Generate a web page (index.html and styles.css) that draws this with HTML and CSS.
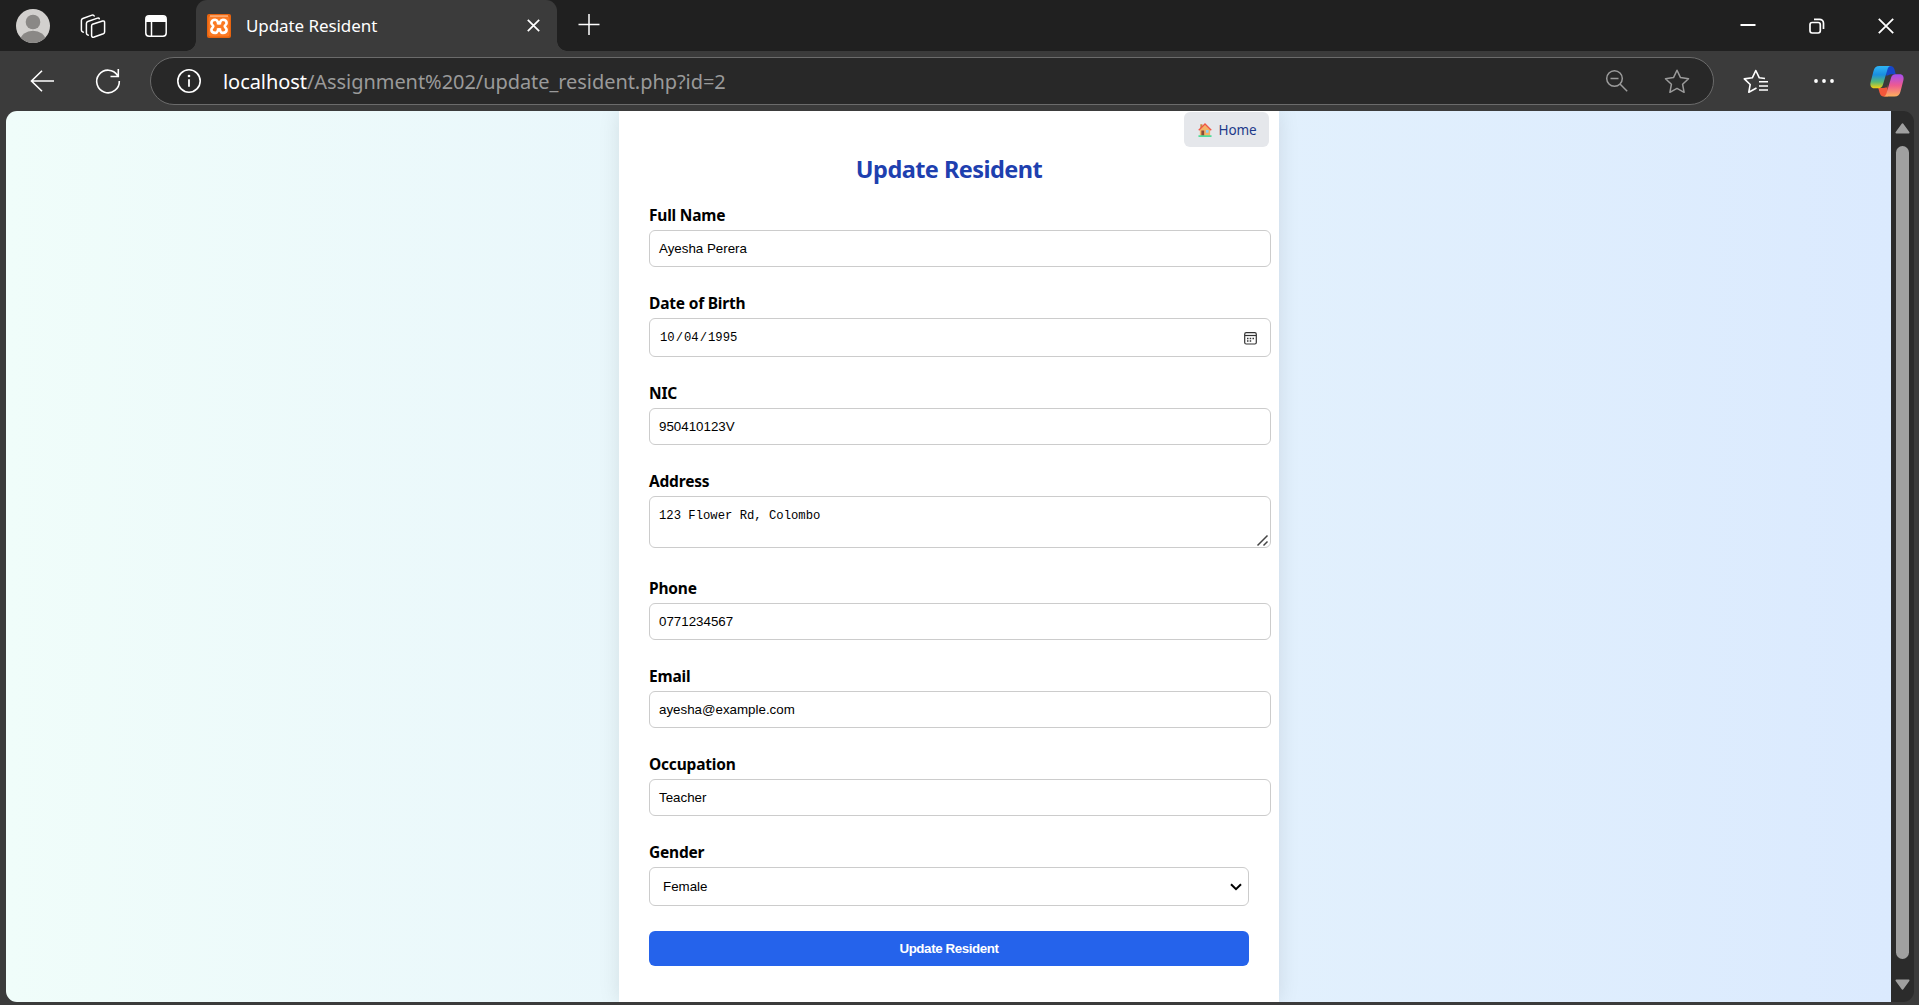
FILE: index.html
```html
<!DOCTYPE html>
<html lang="en">
<head>
<meta charset="utf-8">
<title>Update Resident</title>
<link rel="stylesheet" href="styles.css">
</head>
<body>
<div class="window">
  <header class="tabstrip">
    <svg class="avatar" width="34" height="34" viewBox="0 0 34 34"><defs><clipPath id="av"><circle cx="17" cy="17" r="17"/></clipPath></defs><g clip-path="url(#av)"><rect width="34" height="34" fill="#d2d0ce"/><circle cx="17" cy="13" r="7.3" fill="#8a8886"/><ellipse cx="17" cy="31" rx="12.5" ry="9.3" fill="#8a8886"/></g></svg>
    <svg class="workspaces" width="26" height="26" viewBox="0 0 26 26" fill="none" stroke="#fff" stroke-width="1.5" stroke-linejoin="round" stroke-linecap="round"><path d="M12.5 11.3 22.6 8Q24.6 7.5 24.6 9.5V19Q24.6 20.3 23.3 20.8L14.2 24Q11.6 24.8 11.6 22.4V13Q11.6 11.7 12.5 11.3Z"/><path d="M8.3 22.2 7.5 21.8Q6.4 21.3 6.4 20V10.4Q6.4 9 7.8 8.5L17.5 5.1Q19 4.7 19.3 5.8"/><path d="M3.3 19.2 2.5 18.8Q1.4 18.3 1.4 17V7.4Q1.4 6 2.8 5.5L12 2.1Q13.6 1.6 14.2 3"/></svg>
    <svg class="tabsicon" width="22" height="22" viewBox="0 0 22 22"><rect x=".8" y=".8" width="20.4" height="20.4" rx="3.2" fill="none" stroke="#fff" stroke-width="1.5"/><path d="M1 7V4a3 3 0 0 1 3-3h14a3 3 0 0 1 3 3v3z" fill="#fff"/><path d="M6.5 6v15" stroke="#fff" stroke-width="1.5"/></svg>
    <div class="tab">
      <svg class="favicon" width="24" height="24" viewBox="0 0 24 24"><rect width="24" height="24" rx="2" fill="#e8640f"/><rect x="1.5" y="2" width="21" height="20.5" rx="2" fill="#fb7a24"/><path d="M3 2h18" stroke="#ffc49b" stroke-width="1.2"/><path d="M12 9.300C10.800 9.300 11 5.800 8.200 5.800 5.600 5.800 4.400 7.400 4.400 9c0 1.900 1.900 2.200 1.900 3.300S4.400 13.900 4.400 15.800c0 1.600 1.200 3.100 3.800 3.100 2.800 0 2.600-3.500 3.800-3.500s1 3.500 3.800 3.500c2.600 0 3.800-1.500 3.800-3.100 0-1.900-1.900-2.400-1.900-3.500s1.900-1.400 1.900-3.300c0-1.600-1.200-3.200-3.800-3.200-2.800 0-2.600 3.500-3.800 3.500z" fill="none" stroke="#fff" stroke-width="2.600" stroke-linejoin="round"/><path d="M9.800 9.300h4.400M9.800 15.400h4.400" stroke="#fff" stroke-width="2.200"/></svg>
      <span class="tab-title">Update Resident</span>
      <svg width="13" height="13" viewBox="0 0 13 13"><path d="M.8.8 12.200 12.200M12.200.8.8 12.200" stroke="#fff" stroke-width="1.700"/></svg>
    </div>
    <svg class="plus" width="22" height="22" viewBox="0 0 22 22"><path d="M11 0v21M.5 10.500h21" stroke="#fff" stroke-width="1.500"/></svg>
    <div class="controls">
      <svg width="16" height="16" viewBox="0 0 16 16"><path d="M.5 7h15" stroke="#fff" stroke-width="2"/></svg>
      <svg width="16" height="16" viewBox="0 0 16 16" fill="none" stroke="#fff" stroke-width="1.700"><rect x="1" y="4.500" width="10.300" height="10.500" rx="2.200"/><path d="M5 1.300h5.500a4 4 0 0 1 4 4V11"/></svg>
      <svg width="16" height="16" viewBox="0 0 16 16"><path d="M.8.800 15.200 15.200M15.200.800.8 15.200" stroke="#fff" stroke-width="1.800"/></svg>
    </div>
  </header>
  <div class="toolbar">
    <svg class="back" width="25" height="22" viewBox="0 0 25 22" fill="none" stroke="#fff" stroke-width="1.600"><path d="M24 11H1.500M12 .8 1.500 11 12 21.200"/></svg>
    <svg class="reload" width="26" height="26" viewBox="0 0 26 26" fill="none" stroke="#fff" stroke-width="1.600"><path d="M22.600 7.500A11.300 11.300 0 1 0 24.300 13M23.300 1v7.500H15.500"/></svg>
    <div class="address">
      <svg class="info" width="24" height="24" viewBox="0 0 24 24"><circle cx="12" cy="12" r="11.200" fill="none" stroke="#fff" stroke-width="1.600"/><circle cx="12" cy="7" r="1.300" fill="#fff"/><path d="M12 10.300v7.500" stroke="#fff" stroke-width="1.800"/></svg>
      <div class="url"><span class="host">localhost</span><span class="path">/Assignment%202/update_resident.php?id=2</span></div>
      <svg class="lens" width="22" height="22" viewBox="0 0 22 22" fill="none" stroke="#9b9b9b" stroke-width="1.500"><circle cx="8.500" cy="8.500" r="7.800"/><path d="M14 14l7.200 7.200M4.500 8.500h8"/></svg>
      <svg class="star" width="26" height="25" viewBox="0 0 26 25" fill="none" stroke="#9b9b9b" stroke-width="1.500" stroke-linejoin="round"><path d="m13 1.300 3.500 7.300 8 1.100-5.900 5.600 1.500 8-7.100-3.900-7.100 3.900 1.500-8L1.500 9.700l8-1.100z"/></svg>
    </div>
    <svg class="favs" width="26" height="25" viewBox="0 0 26 25" fill="none" stroke="#fff" stroke-width="1.600" stroke-linejoin="round"><path d="M22 9.500 16.300 8.800 12.800 1.500 9.300 8.800 1.300 9.900 7.200 15.500 5.800 23.200 13.500 19"/><path d="M16 12.700h9M16 17h9M16 21h9"/></svg>
    <svg class="more" width="20" height="4" viewBox="0 0 20 4" fill="#fff"><circle cx="2" cy="2" r="1.900"/><circle cx="10" cy="2" r="1.900"/><circle cx="18" cy="2" r="1.900"/></svg>
    <svg class="copilot" width="34" height="31" viewBox="0 0 34 31"><defs><linearGradient id="c1" x1="0" y1="0" x2="0" y2="1"><stop offset="0" stop-color="#2fb5f5"/><stop offset=".4" stop-color="#1a8ee0"/><stop offset=".72" stop-color="#58b875"/><stop offset="1" stop-color="#f7cf10"/></linearGradient><linearGradient id="c2" x1="0" y1="0" x2="0" y2="1"><stop offset="0" stop-color="#a54df0"/><stop offset=".5" stop-color="#ee5a91"/><stop offset="1" stop-color="#fdb05c"/></linearGradient></defs><path d="M15 0h5.500c2 0 3.500 1.500 4.200 4l1 4.200h-4c-3 0-4 1.500-5 4z" fill="#1747c9"/><path d="M18 30.500h-4.500c-2 0-3.200-1.500-4-4L8.300 22h4c3 0 4-1.500 5-4z" fill="#f4573a"/><path d="M9.500 0H21c-2 0-3 1.500-3.700 4L13 18.500c-.8 2.500-2 3.700-4.500 3.700H4.300C1 22.200-.2 19.500.6 16.200L3.500 5C4.400 1.800 6 0 9.500 0z" fill="url(#c1)"/><path d="M24.500 30.500H13c2 0 3-1.500 3.700-4L21 12c.8-2.500 2-3.700 4.500-3.700h4.200c3.300 0 4.500 2.700 3.700 6l-2.900 11.200c-.9 3.200-2.500 5-6 5z" fill="url(#c2)"/><path d="M16.500 9.500h4.500c-.6.800-.9 1.700-1.200 2.700L17 21.500h-4.200z" fill="#3b3b3b"/></svg>
  </div>
  <div class="viewport">
    <main class="page">
      <section class="card">
        <a class="home"><svg width="14" height="14" viewBox="0 0 15 14" preserveAspectRatio="none"><path d="M2.500 1.200h2.300V5H2.500z" fill="#c9883f"/><path d="M2 6.500 7.500 1.500 13 6.500V13H2z" fill="#f3b467"/><path d="M3.600 7.500h3V13h-3z" fill="#8a4b38"/><path d="M8.500 7h2.800v2.800H8.500z" fill="#8fd0f7"/><path d="M.5 12.200h14V14H.5z" fill="#4fdc9a"/><path d="M.8 7.200 7.500 1l6.700 6.200" fill="none" stroke="#f05545" stroke-width="1.500"/></svg><span>Home</span></a>
        <h2>Update Resident</h2>
        <form>
          <label>Full Name</label>
          <div class="field">Ayesha Perera</div>
          <label>Date of Birth</label>
          <div class="field date"><span>10</span>/<span>04</span>/<span>1995</span>
            <svg width="13" height="13" viewBox="0 0 13 13"><rect x=".7" y=".7" width="11.600" height="11.300" rx="1.500" fill="none" stroke="#333" stroke-width="1.200"/><path d="M1 3.500h11" stroke="#333" stroke-width="1.200"/><path d="M3 6.500h1.500M5.700 6.500h1.500M8.500 6.500H10M3 9h1.500M5.700 9h1.500" stroke="#333" stroke-width="1.300"/></svg>
          </div>
          <label>NIC</label>
          <div class="field">950410123V</div>
          <label>Address</label>
          <div class="field area"><span>123 Flower Rd, Colombo</span>
            <svg width="11" height="11" viewBox="0 0 11 11"><path d="M.5 10.500 10.500.500M6.500 10.500l4-4" stroke="#444" stroke-width="1.500"/></svg>
          </div>
          <label>Phone</label>
          <div class="field">0771234567</div>
          <label>Email</label>
          <div class="field">ayesha@example.com</div>
          <label>Occupation</label>
          <div class="field">Teacher</div>
          <label>Gender</label>
          <div class="field select"><span>Female</span>
            <svg width="12" height="8" viewBox="0 0 12 8"><path d="M1 1.200 6 6.200 11 1.200" fill="none" stroke="#000" stroke-width="2"/></svg>
          </div>
          <button type="button">Update Resident</button>
        </form>
      </section>
    </main>
    <div class="scrollbar">
      <svg width="15" height="11" viewBox="0 0 15 11"><path d="M7.500 1.300 13.500 9.600H1.500z" fill="#a0a0a0" stroke="#a0a0a0" stroke-width="2" stroke-linejoin="round"/></svg>
      <div class="thumb"></div>
      <svg width="15" height="11" viewBox="0 0 15 11"><path d="M7.500 9.700 13.500 1.400H1.500z" fill="#a0a0a0" stroke="#a0a0a0" stroke-width="2" stroke-linejoin="round"/></svg>
    </div>
  </div>
</div>
</body>
</html>
```
FILE: styles.css
```css
* { box-sizing: border-box; }
body { margin: 0; font-family: "Segoe UI", "Noto Sans", sans-serif; overflow: hidden; }
svg { display: block; flex: none; overflow: visible; }
.window { width: 1919px; height: 1005px; background: #3b3b3b; display: flex; flex-direction: column; }

.tabstrip { height: 51px; background: #202020; display: flex; align-items: center; padding: 0 25px 0 16px; }
.workspaces { margin-left: 30px; }
.tabsicon { margin-left: 39px; }
.tab { position: relative; width: 361px; height: 51px; margin-left: 29px; padding: 0 17px 0 11px; background: #3b3b3b; border-radius: 11px 11px 0 0; display: flex; align-items: center; }
.tab::before, .tab::after { content: ""; position: absolute; bottom: 0; width: 10px; height: 10px; }
.tab::before { left: -10px; background: radial-gradient(circle at 0 0, transparent 9.5px, #3b3b3b 10px); }
.tab::after { right: -10px; background: radial-gradient(circle at 100% 0, transparent 9.5px, #3b3b3b 10px); }
.tab-title { flex: 1; margin-left: 15px; color: #fff; font-size: 17px; letter-spacing: -.08px; white-space: nowrap; }
.plus { margin-left: 21px; margin-bottom: 2px; }
.controls { margin-left: auto; display: flex; gap: 53px; }

.toolbar { height: 60px; display: flex; align-items: center; padding: 0 15px 0 30px; }
.reload { margin-left: 40px; }
.address { width: 1568px; height: 48px; margin-left: 29px; padding: 0 23px 0 26px; border: 1px solid #6b6b6b; border-radius: 24px; background: #282828; display: flex; align-items: center; }
.url { flex: 1; margin-left: 22px; font-size: 20px; letter-spacing: -.06px; white-space: nowrap; }
.host { color: #fff; }
.path { color: #9a9a9a; }
.star { margin-left: 36px; }
.favs { margin-left: 29px; }
.more { margin-left: 45px; }
.copilot { margin-left: 36px; }

.viewport { width: 1908px; height: 891px; margin-left: 6px; border-radius: 11px; overflow: hidden; display: flex; }
.page { width: 1885px; padding-left: 613px; background: linear-gradient(to right, #f0fdfa, #dbeafe); display: flex; }
.card { width: 660px; padding: 1px 30px 0; background: #fff; box-shadow: 0 0 20px rgba(0, 0, 0, .1); display: flex; flex-direction: column; }
.home { align-self: flex-end; width: 85px; height: 35px; margin-right: -20px; padding-left: 2px; border-radius: 6px; background: #e5e7eb; color: #1e3a8a; font-size: 13.500px; letter-spacing: -.1px; display: flex; align-items: center; justify-content: center; gap: 6px; }
h2 { margin: 5px 0 18px; height: 34px; line-height: 34px; text-align: center; font-size: 23.500px; letter-spacing: -.55px; color: #1e40af; }
form { display: flex; flex-direction: column; align-items: flex-start; }
label { height: 22px; line-height: 22px; margin-bottom: 4px; font-size: 15.500px; letter-spacing: -.2px; font-weight: 700; color: #000; }
.field { width: 622px; height: 37px; margin-bottom: 25px; padding: 0 10px 0 9px; border: 1px solid #ccc; border-radius: 6px; background: #fff; color: #000; font: 13.333px "Liberation Sans", sans-serif; display: flex; align-items: center; }
.date, .area { font-family: "Liberation Mono", monospace; font-size: 12.220px; }
.date { height: 39px; padding-top: 1px; }
.date span { padding: 0 1px; }
.date svg { margin-left: auto; margin-right: 3px; }
.area { height: 52px; margin-bottom: 29px; padding: 12px 2px 1px 9px; align-items: flex-start; justify-content: space-between; }
.area svg { align-self: flex-end; }
.select { width: 600px; height: 39px; margin-bottom: 25px; padding: 0 6px 0 13px; justify-content: space-between; }
button { width: 600px; height: 35px; border: 0; border-radius: 6px; background: #2563eb; color: #fff; font: bold 13.333px "Liberation Sans", sans-serif; letter-spacing: -.4px; }

.scrollbar { width: 23px; background: #2b2b2b; padding: 12px 0; display: flex; flex-direction: column; align-items: center; justify-content: space-between; }
.thumb { width: 13px; height: 813px; margin-bottom: 9px; border-radius: 7px; background: #a0a0a0; }
```
